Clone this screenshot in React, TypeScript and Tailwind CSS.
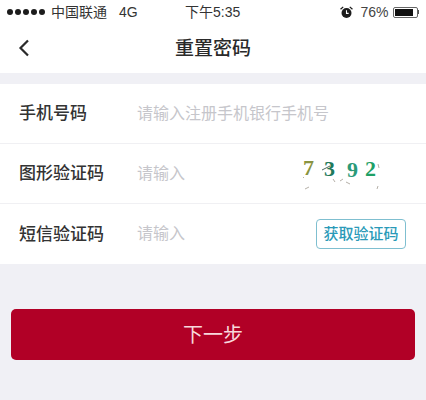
const cjk = "font-['Liberation_Sans','Noto_Sans_CJK_SC',sans-serif]";

function Row({ label, children, border = true }: { label: string; children: React.ReactNode; border?: boolean }) {
  return (
    <div className={`relative flex h-[60px] items-center pl-[19px] ${border ? "border-b border-[#f0f0f3]" : ""}`}>
      <span className="mt-[1px] w-[118px] text-[17px] font-medium text-[#333]">{label}</span>
      {children}
    </div>
  );
}

// Captcha digits are text with little noise strokes on top
function Captcha() {
  return (
    <div className="absolute left-[296px] top-[10px] h-[46px] w-[92px]">
      <div className="flex font-['Liberation_Serif','DejaVu_Serif',serif] text-[22px] font-bold leading-none">
        <span className="ml-[7px] mt-[3px] text-[#8a9440]">7</span>
        <span className="ml-[10px] mt-[4px] text-[#1f7a5c]">3</span>
        <span className="ml-[12px] mt-[5px] text-[#2a9a78]">9</span>
        <span className="ml-[7px] mt-[4px] text-[#1fa066]">2</span>
      </div>
      <svg className="absolute inset-0" width="92" height="46" fill="none" stroke="#b5b0a8" strokeWidth="1">
        <path d="M7 23l1 1M9 35l4-2M37 25l2 3M44 27l3-2M50 28l4 2M82 10l1 4M81 35l1-3" />
        <path d="M26 16l8-4" stroke="#4a6a60" />
      </svg>
    </div>
  );
}

export default function App() {
  return (
    <div className={`h-[400px] w-[426px] overflow-hidden bg-[#f0f0f5] ${cjk}`}>
      <div className="bg-white">
        <div className="relative flex h-[24px] items-center px-[7px] text-[14px] text-[#333]">
          <div className="flex gap-[2px]">
            {[0, 1, 2, 3, 4].map((i) => (
              <span key={i} className="h-[6px] w-[6px] rounded-full bg-[#1c1c1c]" />
            ))}
          </div>
          <span className="ml-[6px]">中国联通</span>
          <span className="ml-[12px]">4G</span>
          <span className="absolute left-[185px]">下午5:35</span>
          <div className="ml-auto flex items-center">
            <svg width="13" height="13" viewBox="0 0 12 12" className="mr-[7px]">
              <circle cx="6" cy="6.5" r="4.6" fill="#1c1c1c" />
              <path d="M6 4v2.8h2" stroke="#fff" strokeWidth="1" fill="none" />
              <path d="M0.5 3L3 0.8M11.5 3L9 0.8" stroke="#1c1c1c" strokeWidth="1.2" />
            </svg>
            <span className="text-[#444]">76%</span>
            <div className="ml-[4px] flex h-[11px] w-[25px] rounded-[2px] border border-[#666] p-[1px]">
              <div className="w-[18px] bg-[#111]" />
            </div>
            <div className="h-[4px] w-[1.5px] bg-[#555]" />
          </div>
        </div>
        <div className="relative flex h-[49px] items-center justify-center">
          <svg width="12" height="18" viewBox="0 0 12 18" className="absolute left-[18px] top-[15px]" fill="none">
            <path d="M10 1.5L2.5 9l7.5 7.5" stroke="#2a2a2a" strokeWidth="2.2" />
          </svg>
          <span className="mt-[1px] text-[19px] font-medium text-[#2a2a2a]">重置密码</span>
        </div>
      </div>
      <div className="mt-[11px] bg-white">
        <Row label="手机号码">
          <span className="text-[16px] text-[#c6c6cb]">请输入注册手机银行手机号</span>
        </Row>
        <Row label="图形验证码">
          <span className="text-[16px] text-[#c6c6cb]">请输入</span>
          <Captcha />
        </Row>
        <Row label="短信验证码" border={false}>
          <span className="text-[16px] text-[#c6c6cb]">请输入</span>
          <div className="absolute left-[316px] top-[15px] flex h-[30px] w-[90px] items-center justify-center rounded-[4px] border border-[#7fbfd0] text-[15px] font-medium text-[#2a9ab8]">
            获取验证码
          </div>
        </Row>
      </div>
      <button
        type="button"
        className="mx-[11px] mt-[45px] flex h-[51px] w-[404px] items-center justify-center rounded-[5px] bg-[#b10026] text-[20px] text-[#f8d8dc]"
      >
        下一步
      </button>
    </div>
  );
}
